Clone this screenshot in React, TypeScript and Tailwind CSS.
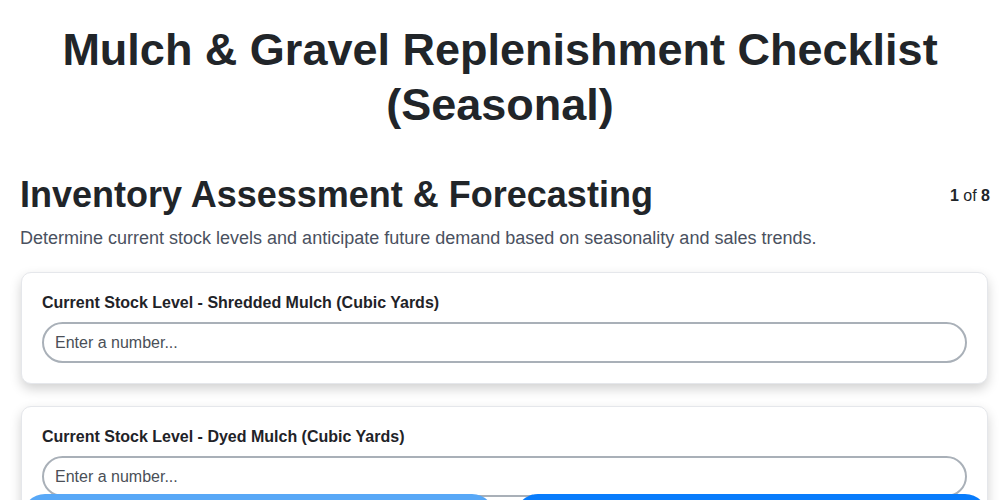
import React from "react";

const fields = [
  "Current Stock Level - Shredded Mulch (Cubic Yards)",
  "Current Stock Level - Dyed Mulch (Cubic Yards)",
  "Current Stock Level - Pea Gravel (Tons)",
];

function NumberField({ label }: { label: string }) {
  return (
    <div className="mb-[22px] ml-px mr-[2px] rounded-[10px] border border-gray-200 bg-white p-5 shadow-[0_5px_12px_rgba(0,0,0,0.18)]">
      <label className="mb-[10px] block text-[16px] font-bold leading-[19px] text-[#1f2328]">
        {label}
      </label>
      <input
        type="text"
        placeholder="Enter a number..."
        className="block h-[41px] w-full rounded-full border-2 border-[#a9b0b8] bg-white px-[11px] text-[16px] text-[#333] placeholder:text-[#4a4f57] outline-none"
      />
    </div>
  );
}

export default function App() {
  return (
    <div
      className="min-h-screen bg-white pb-24 pl-5 pr-[10px] text-[#212529]"
      style={{ fontFamily: '"Liberation Sans", Arial, sans-serif' }}
    >
      <h1 className="pr-[10px] pt-[22px] text-center text-[45px] font-bold leading-[55px] text-[#212529]">
        Mulch &amp; Gravel Replenishment Checklist (Seasonal)
      </h1>

      <div className="mt-[42px] flex items-start justify-between">
        <h2 className="text-[36px] font-bold leading-[42px] text-[#212529]">
          Inventory Assessment &amp; Forecasting
        </h2>
        <div className="mt-[10px] text-[16px] text-[#212529]">
          <span className="font-bold">1</span> of <span className="font-bold">8</span>
        </div>
      </div>
      <p className="mt-[10px] mb-[22px] text-[18px] leading-[24px] text-[#4a5160]">
        Determine current stock levels and anticipate future demand based on seasonality and sales trends.
      </p>

      {fields.map((f) => (
        <NumberField key={f} label={f} />
      ))}

      <div className="fixed bottom-[-40px] left-[22px] right-[12px] flex gap-5">
        <button className="h-[46px] flex-1 rounded-full bg-[#58a8f7] pt-5 text-[16px] font-bold text-white">
          Previous
        </button>
        <button className="h-[46px] flex-1 rounded-full bg-[#087cfc] pt-5 text-[16px] font-bold text-white">
          Next
        </button>
      </div>
    </div>
  );
}
